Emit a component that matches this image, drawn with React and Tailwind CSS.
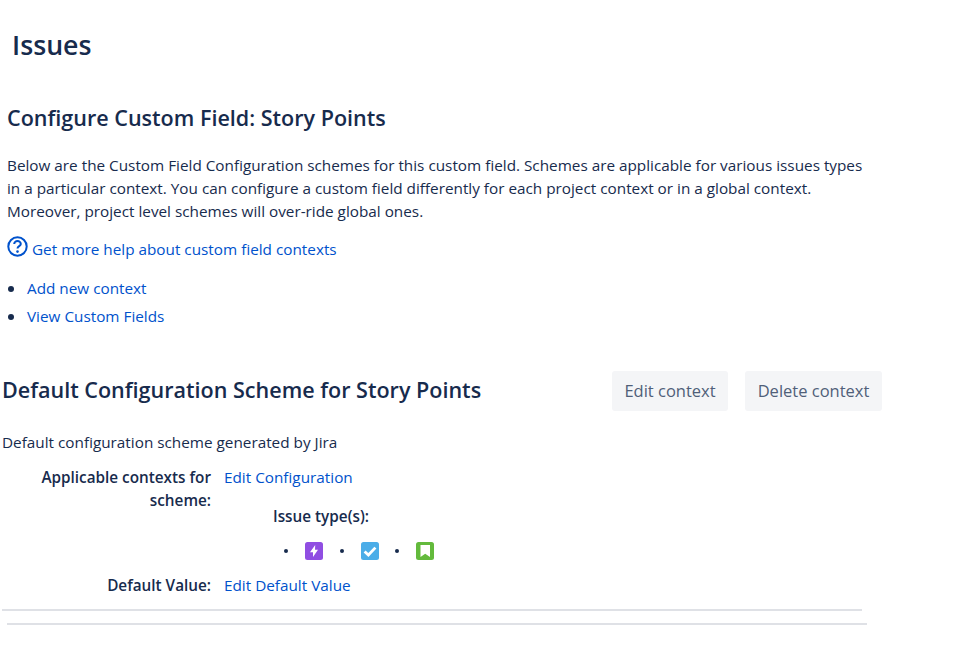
const FONT = "font-['Open_Sans','Noto_Sans',sans-serif]";
const link = "text-[#0052cc]";

function HelpIcon() {
  return (
    <svg width="21" height="21" viewBox="0 0 21 21" fill="none" className="shrink-0 relative top-[-3px]">
      <circle cx="10.5" cy="10.5" r="9.2" stroke="#0052cc" strokeWidth="2" />
      <path d="M7.2 8a3.3 3 0 0 1 6.6 0c0 2.2-3.3 2.2-3.3 4.6" stroke="#0052cc" strokeWidth="2" fill="none" />
      <circle cx="10.5" cy="15.6" r="1.3" fill="#0052cc" />
    </svg>
  );
}

function TypeIcon({ color, children }) {
  return (
    <svg width="18" height="18" viewBox="0 0 18 18" className="shrink-0">
      <rect width="18" height="18" rx="2.5" fill={color} />
      {children}
    </svg>
  );
}

function Bullet({ children }) {
  return (
    <div className="flex items-center">
      <span className="w-[4px] h-[4px] rounded-full bg-[#172b4d]" />
      <span className="ml-[17px] flex">{children}</span>
    </div>
  );
}

export default function App() {
  return (
    <div className={`${FONT} w-[960px] h-[647px] overflow-hidden bg-white text-[#172b4d] text-[15.3px] leading-[22.857px]`}>
      <h1 className="ml-[12px] pt-[27px] text-[26.7px] leading-[36px] font-semibold">Issues</h1>

      <div className="ml-[7px] w-[860px] mt-[40px]">
        <h2 className="text-[21.55px] leading-[30px] font-semibold">Configure Custom Field: Story Points</h2>
        <p className="mt-[21px] whitespace-nowrap">
          Below are the Custom Field Configuration schemes for this custom field. Schemes are applicable for various issues types<br />
          in a particular context. You can configure a custom field differently for each project context or in a global context.<br />
          Moreover, project level schemes will over-ride global ones.
        </p>
        <div className="flex items-center mt-[15px] h-[22.857px]">
          <HelpIcon />
          <a className={`${link} ml-[4px]`}>Get more help about custom field contexts</a>
        </div>
        <ul className="mt-[17px] flex flex-col gap-[5px]">
          <li className="flex items-center">
            <span className="ml-[1px] w-[6px] h-[6px] rounded-full bg-[#172b4d]" />
            <a className={`${link} ml-[13px]`}>Add new context</a>
          </li>
          <li className="flex items-center">
            <span className="ml-[1px] w-[6px] h-[6px] rounded-full bg-[#172b4d]" />
            <a className={`${link} ml-[13px]`}>View Custom Fields</a>
          </li>
        </ul>
      </div>

      <div className="ml-[2px] w-[880px] mt-[42.5px]">
        <div className="flex items-center h-[40px]">
          <h2 className="text-[21.55px] leading-[30px] font-semibold flex-1 mb-[1px]">Default Configuration Scheme for Story Points</h2>
          <button className="w-[116px] h-[40px] pt-[1px] rounded-[3px] bg-[#f4f5f7] text-[#505f79] text-[16.5px]">Edit context</button>
          <button className="ml-[17px] w-[137px] h-[40px] pt-[1px] rounded-[3px] bg-[#f4f5f7] text-[#505f79] text-[16.5px]">Delete context</button>
        </div>
        <p className="mt-[20.5px]">Default configuration scheme generated by Jira</p>

        <div className="flex mt-[11.7px]">
          <div className="w-[209px] text-right font-semibold">Applicable contexts for scheme:</div>
          <div className="ml-[13px] flex flex-col">
            <a className={link}>Edit Configuration</a>
            <div className="ml-[49px] mt-[16.7px] font-semibold">Issue type(s):</div>
            <div className="flex items-center ml-[60px] mt-[13.5px] h-[18px]">
              <Bullet>
                <TypeIcon color="#904ee2">
                  <path d="M10.2 3 5 10.2h3v4.8l5-7.2h-3z" fill="#fff" />
                </TypeIcon>
              </Bullet>
              <div className="ml-[16.5px]">
                <Bullet>
                  <TypeIcon color="#4bade8">
                    <path d="M3.6 9.4 7.4 13 14.4 5.6" stroke="#fff" strokeWidth="2.8" fill="none" />
                  </TypeIcon>
                </Bullet>
              </div>
              <div className="ml-[16px]">
                <Bullet>
                  <TypeIcon color="#63ba3c">
                    <path d="M4.5 3h9.5v12L9.2 11.8 4.5 15z" fill="#fff" />
                  </TypeIcon>
                </Bullet>
              </div>
            </div>
          </div>
        </div>

        <div className="flex mt-[14.5px]">
          <div className="w-[209px] text-right font-semibold">Default Value:</div>
          <a className={`${link} ml-[13px]`}>Edit Default Value</a>
        </div>
      </div>

      <hr className="ml-[2px] w-[860px] mt-[12.5px] border-0 h-[2px] bg-[#dfe1e6]" />
      <hr className="ml-[7px] w-[860px] mt-[12px] border-0 h-[2px] bg-[#dfe1e6]" />
    </div>
  );
}
